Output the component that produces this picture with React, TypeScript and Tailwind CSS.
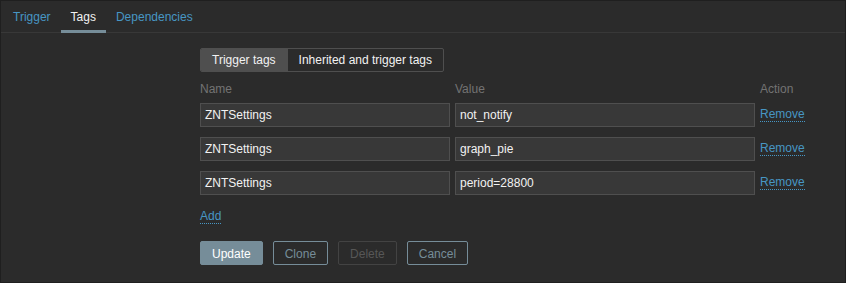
import React from "react";

const rows = [
  { name: "ZNTSettings", value: "not_notify" },
  { name: "ZNTSettings", value: "graph_pie" },
  { name: "ZNTSettings", value: "period=28800" },
];

export default function App() {
  return (
    <div
      className="w-[846px] h-[283px] bg-[#2b2b2b] border border-[#1f1f1f] text-[12px] text-[#f2f2f2] overflow-hidden"
      style={{ fontFamily: '"Liberation Sans", Arial, sans-serif' }}
    >
      <div className="flex h-[32px] border-b border-[#383838] pl-[2px]">
        <div className="h-[32px] -mb-px px-[10px] pt-[9px] leading-[14px] text-[#4796c4] border-b-[3px] border-transparent">
          Trigger
        </div>
        <div className="h-[32px] -mb-px px-[10px] pt-[9px] leading-[14px] text-[#f2f2f2] border-b-[3px] border-[#768d99]">
          Tags
        </div>
        <div className="h-[32px] -mb-px px-[10px] pt-[9px] leading-[14px] text-[#4796c4] border-b-[3px] border-transparent">
          Dependencies
        </div>
      </div>

      <div className="ml-[199px] mt-[15px]">
        <div className="inline-flex h-[24px] border border-[#4f4f4f] rounded-[2px] overflow-hidden">
          <div className="flex items-center px-[11px] bg-[#4f4f4f] text-[#f2f2f2] leading-[14px]">
            Trigger tags
          </div>
          <div className="flex items-center px-[11px] border-l border-[#4f4f4f] text-[#f2f2f2] leading-[14px]">
            Inherited and trigger tags
          </div>
        </div>

        <div className="flex mt-[10px] h-[14px] leading-[14px] text-[#737373]">
          <div className="w-[250px]">Name</div>
          <div className="w-[300px] ml-[5px]">Value</div>
          <div className="ml-[5px]">Action</div>
        </div>

        <div className="flex flex-col gap-[10px] mt-[7px]">
          {rows.map((r, i) => (
            <div key={i} className="flex items-center">
              <div className="w-[250px] h-[24px] bg-[#383838] border border-[#4f4f4f] flex items-center px-[4px] leading-[14px]">
                {r.name}
              </div>
              <div className="w-[300px] h-[24px] ml-[5px] bg-[#383838] border border-[#4f4f4f] flex items-center px-[4px] leading-[14px]">
                {r.value}
              </div>
              <div className="ml-[5px] -mt-[2px]">
                <span className="text-[#4796c4] leading-[14px] border-b border-dotted border-[#4796c4]">
                  Remove
                </span>
              </div>
            </div>
          ))}
        </div>

        <div className="mt-[12px] h-[16px]">
          <span className="text-[#4796c4] leading-[14px] border-b border-dotted border-[#4796c4]">
            Add
          </span>
        </div>

        <div className="flex gap-[10px] mt-[18px]">
          <div className="h-[24px] px-[11px] pt-[1px] flex items-center bg-[#768d99] border border-[#768d99] rounded-[2px] text-white leading-[14px]">
            Update
          </div>
          <div className="h-[24px] px-[11px] pt-[1px] flex items-center border border-[#768d99] rounded-[2px] text-[#768d99] leading-[14px]">
            Clone
          </div>
          <div className="h-[24px] px-[11px] pt-[1px] flex items-center border border-[#434343] rounded-[2px] text-[#575757] leading-[14px]">
            Delete
          </div>
          <div className="h-[24px] px-[11px] pt-[1px] flex items-center border border-[#768d99] rounded-[2px] text-[#768d99] leading-[14px]">
            Cancel
          </div>
        </div>
      </div>
    </div>
  );
}
